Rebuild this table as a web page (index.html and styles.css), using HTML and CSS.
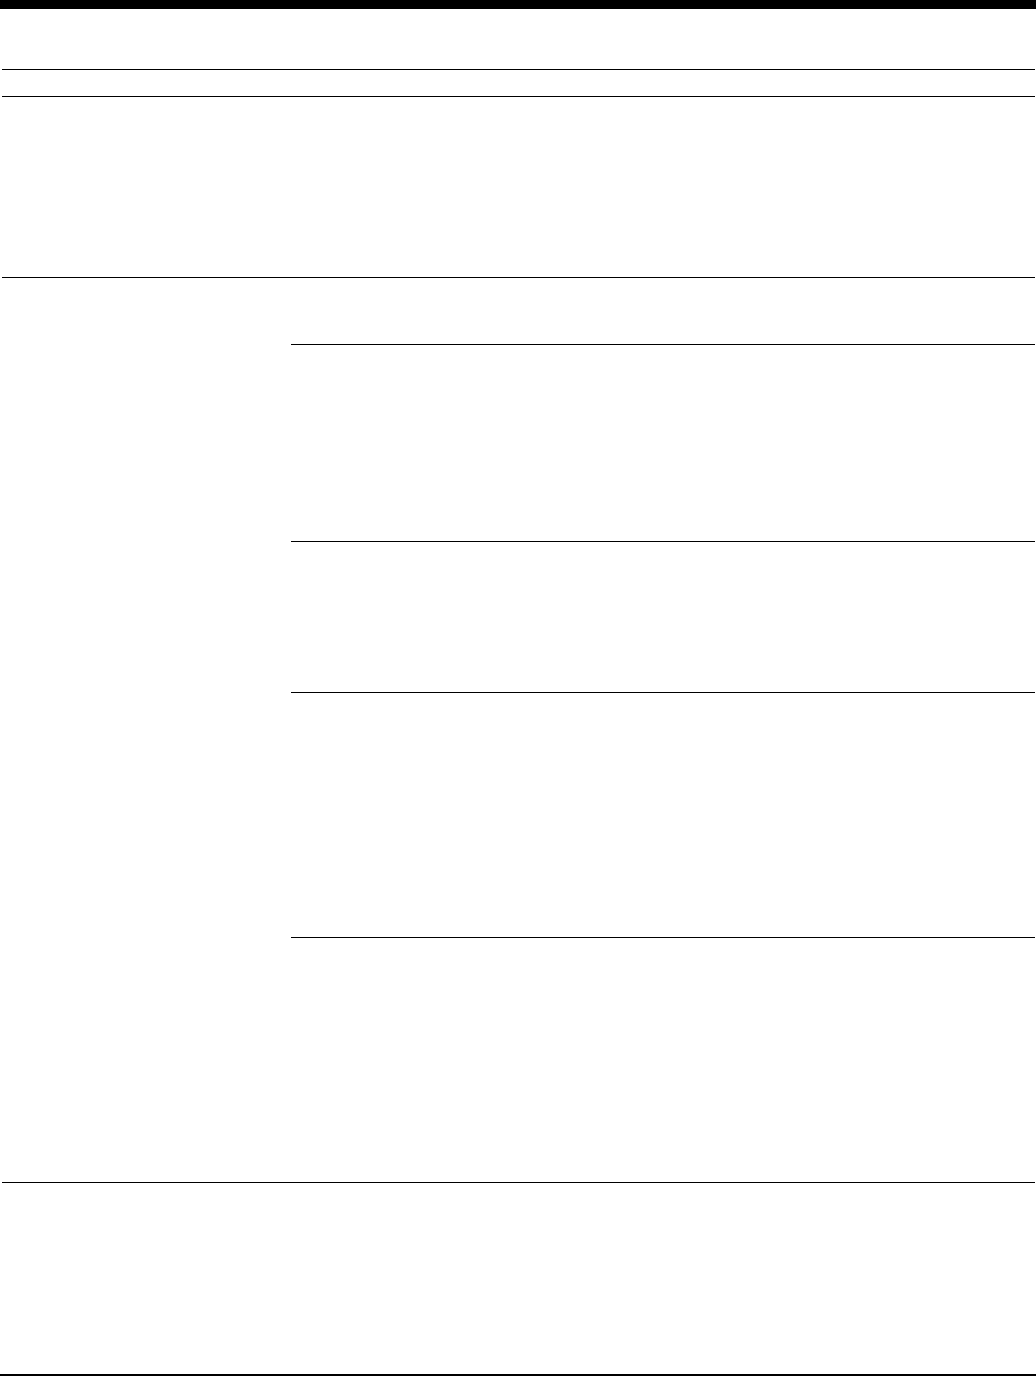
FILE: index.html
```html
<!DOCTYPE html>
<html lang="en">
<head>
    <meta charset="UTF-8">
    <meta name="viewport" content="width=device-width, initial-scale=1.0">
    <title>Sheet</title>
    <link rel="stylesheet" href="styles.css">
</head>
<body>
    <div class="topbar"></div>
    <div class="sheet">
        <div class="row row-head"></div>
        <div class="row row-sub"></div>
        <div class="row row-intro"></div>
        <div class="row row-group">
            <div class="group-label"></div>
            <div class="group-items">
                <div class="item item-1"></div>
                <div class="item item-2"></div>
                <div class="item item-3"></div>
                <div class="item item-4"></div>
                <div class="item item-5"></div>
            </div>
        </div>
        <div class="row row-foot"></div>
    </div>
    <div class="bottombar"></div>
</body>
</html>
```

FILE: styles.css
```css
html, body { margin: 0; padding: 0; background: #fff; font-family: "Liberation Serif", serif; }
body { height: 1376px; overflow: hidden; display: flex; flex-direction: column; }
.topbar { height: 9px; background: #000; }
.bottombar { height: 2px; background: #000; }
.sheet { flex-grow: 1; display: flex; flex-direction: column; padding: 0 1px 0 2px; }
.row { border-bottom: 1px solid #000; }
.row-head { height: 60px; }
.row-sub { height: 26px; }
.row-intro { height: 180px; }
.row-group { display: flex; }
.group-label { width: 289px; }
.group-items { flex-grow: 1; display: flex; flex-direction: column; }
.item { border-bottom: 1px solid #000; }
.item:last-child { border-bottom: none; }
.item-1 { height: 66px; }
.item-2 { height: 196px; }
.item-3 { height: 150px; }
.item-4 { height: 244px; }
.item-5 { height: 244px; }
.row-foot { flex-grow: 1; border-bottom: none; }
```
